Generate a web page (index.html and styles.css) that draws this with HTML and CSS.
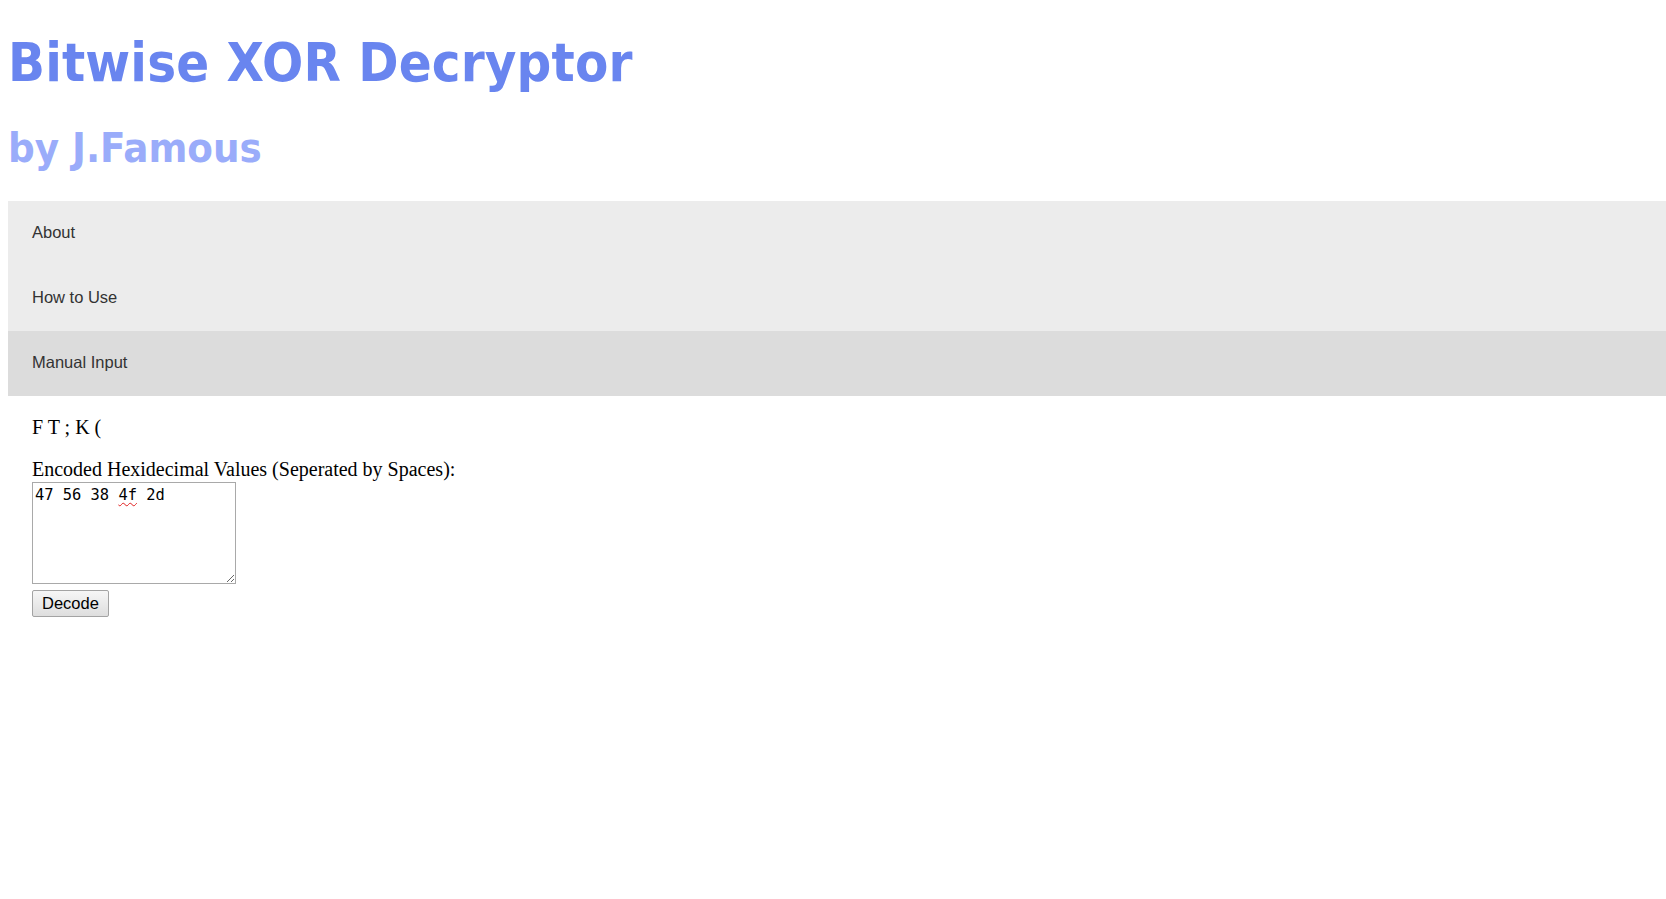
FILE: index.html
```html
<!DOCTYPE html>
<html lang="en">
<head>
<meta charset="utf-8">
<title>Bitwise XOR Decryptor</title>
<link rel="stylesheet" href="styles.css">
</head>
<body>
<header class="masthead">
  <h1 class="title">Bitwise XOR Decryptor</h1>
  <h2 class="byline">by J.Famous</h2>
</header>
<nav class="tabs">
  <a class="tab" href="#about">About</a>
  <a class="tab" href="#how">How to Use</a>
  <a class="tab tab-active" href="#manual">Manual Input</a>
</nav>
<main class="panel">
  <p class="output">F T ; K (</p>
  <form class="decode-form">
    <label class="field-label" for="hex">Encoded Hexidecimal Values (Seperated by Spaces):</label>
    <div class="textbox-wrap">
      <textarea id="hex" class="textbox" spellcheck="false">47 56 38 4f 2d</textarea>
      <div class="typo-layer" aria-hidden="true">47 56 38 <span class="typo">4f</span> 2d</div>
    </div>
    <button type="button" class="btn">Decode</button>
  </form>
</main>
</body>
</html>
```
FILE: styles.css
```css
html, body {
  margin: 0;
  padding: 0;
  background: #ffffff;
}

body {
  margin: 0 0 0 8px;
  font-family: "Liberation Serif", "Times New Roman", serif;
  font-size: 20px;
  color: #000;
}

.masthead {
  display: flex;
  flex-direction: column;
}

.title,
.byline {
  font-family: "DejaVu Sans Condensed", "DejaVu Sans", Verdana, sans-serif;
  font-stretch: condensed;
  font-weight: bold;
}

.title {
  margin: 32px 0 0 0;
  font-size: 54px;
  letter-spacing: 0.15px;
  line-height: 62px;
  color: #6985ef;
}

.byline {
  margin: 30px 0 0 0;
  font-size: 41.5px;
  line-height: 48px;
  color: #9aacfa;
}

.tabs {
  display: flex;
  flex-direction: column;
  margin: 29px 0 0 0;
  background: #ececec;
}

.tab {
  display: block;
  height: 65px;
  box-sizing: border-box;
  padding: 22px 24px 0 24px;
  font-family: "Liberation Sans", Arial, sans-serif;
  font-size: 16.5px;
  line-height: 19px;
  color: #333333;
  text-decoration: none;
}

.tab-active {
  background: #dcdcdc;
}

.panel {
  padding: 0 24px;
}

.output {
  margin: 20px 0 0 0;
  line-height: 23px;
}

.decode-form {
  display: flex;
  flex-direction: column;
  align-items: flex-start;
  margin-top: 19px;
}

.field-label {
  display: block;
  line-height: 23px;
}

.textbox-wrap {
  position: relative;
  margin-top: 1px;
}

.textbox,
.typo-layer {
  box-sizing: border-box;
  width: 204px;
  height: 102px;
  padding: 3px 2px 2px 2px;
  border: 1px solid #a9a9a9;
  font-family: "DejaVu Sans Mono", Consolas, monospace;
  font-size: 15.4px;
  line-height: 18px;
}

.textbox {
  display: block;
  margin: 0;
  color: #000;
  background: #fff;
  border-radius: 0;
  resize: both;
  outline: none;
}

.typo-layer {
  position: absolute;
  left: 0;
  top: 0;
  border-color: transparent;
  color: transparent;
  pointer-events: none;
  white-space: pre;
}

.typo {
  text-decoration: underline wavy #e02020;
  text-decoration-thickness: 1px;
  text-underline-offset: 2px;
  text-decoration-skip-ink: none;
}

.btn {
  margin-top: 6px;
  box-sizing: border-box;
  height: 27px;
  padding: 0 9px;
  border: 1px solid #a3a3a3;
  border-radius: 2px;
  background: linear-gradient(#f6f6f6, #dedede);
  font-family: "Liberation Sans", Arial, sans-serif;
  font-size: 16.5px;
  line-height: 19px;
  color: #000;
}
```
